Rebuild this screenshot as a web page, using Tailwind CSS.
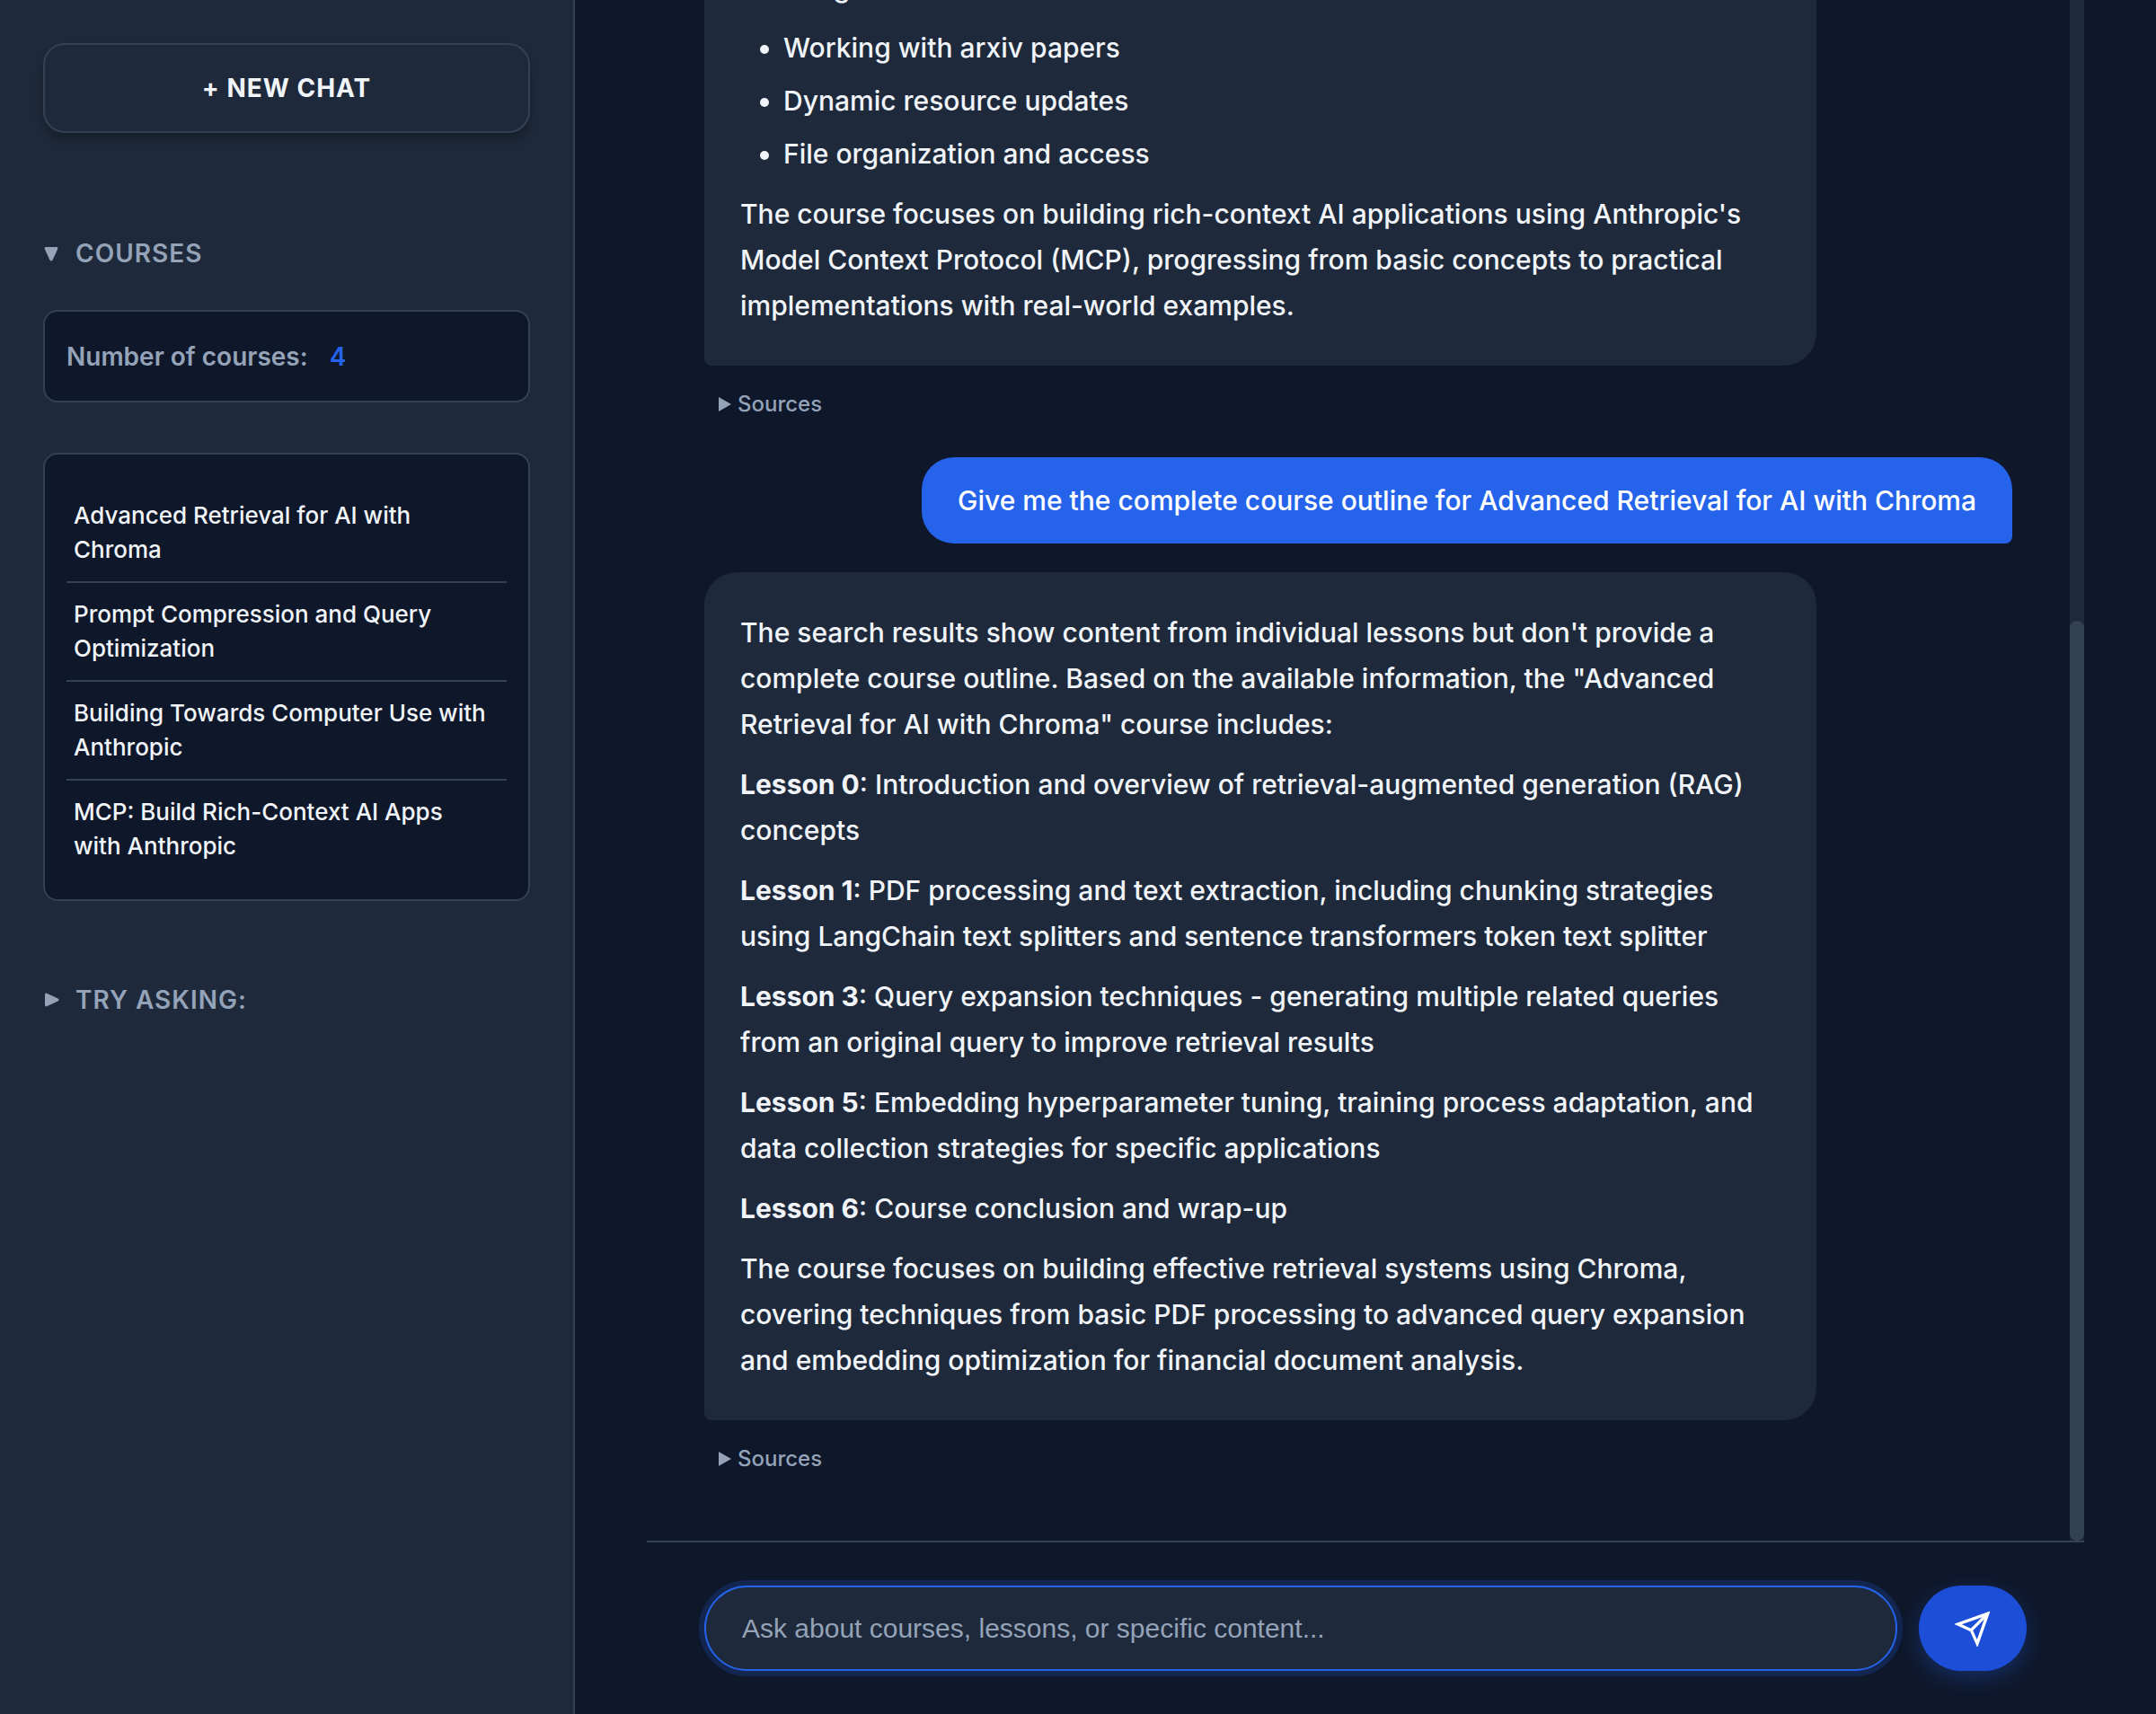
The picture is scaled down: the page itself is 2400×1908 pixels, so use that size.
<!DOCTYPE html>
<html lang="en">
<head>
<meta charset="utf-8">
<meta name="viewport" content="width=device-width, initial-scale=1">
<title>Course Materials Assistant</title>
<script src="https://cdn.jsdelivr.net/npm/@tailwindcss/browser@4"></script>
</head>
<body class="flex h-screen overflow-hidden bg-[#0f172a] font-['Inter',sans-serif] text-[#f1f5f9]">

  <aside class="flex w-[640px] shrink-0 flex-col border-r-2 border-[#334155] bg-[#1e293b] px-12 pt-12">
    <button type="button" class="h-[100px] w-full rounded-3xl border-2 border-[#334155] text-[28px] font-bold tracking-[1px] shadow-[0_8px_12px_-2px_rgba(0,0,0,0.3)]">+ NEW CHAT</button>

    <details open class="mt-28">
      <summary class="flex h-11 cursor-pointer list-none items-center text-[28px] leading-[44px] font-semibold tracking-[1px] text-[#94a3b8]">
        <svg class="mr-4 size-5" viewBox="0 0 20 20" fill="currentColor" aria-hidden="true"><path d="M3 3h12q2 0 1.300 2l-5.500 12q-1.800 3-3.600 0L1.700 5Q1 3 3 3z"/></svg>
        COURSES
      </summary>
      <div class="mt-[41px] flex h-[103px] items-center rounded-2xl border-2 border-[#334155] bg-[#0f172a] px-6 text-[28px] font-semibold">
        <span class="text-[#94a3b8]">Number of courses:</span>
        <span class="ml-6 text-[#2563eb]">4</span>
      </div>
      <ul class="mt-14 divide-y-2 divide-[#334155] rounded-2xl border-2 border-[#334155] bg-[#0f172a] px-6 pt-[33px] pb-6 text-[26px] leading-[38px] font-medium">
        <li class="px-2 py-4">Advanced Retrieval for AI with Chroma</li>
        <li class="px-2 py-4">Prompt Compression and Query Optimization</li>
        <li class="px-2 py-4">Building Towards Computer Use with Anthropic</li>
        <li class="px-2 py-4">MCP: Build Rich-Context AI Apps <br>with Anthropic</li>
      </ul>
    </details>

    <details class="mt-[88px]">
      <summary class="flex h-11 cursor-pointer list-none items-center text-[28px] leading-[44px] font-semibold tracking-[1px] text-[#94a3b8]">
        <svg class="mr-4 size-5" viewBox="0 0 20 20" fill="currentColor" aria-hidden="true"><path d="M2 4.500q0-2.500 2-1.800l12 5.500q3 1.800 0 3.600L4 17.300q-2 .7-2-1.800z"/></svg>
        TRY ASKING:
      </summary>
    </details>
  </aside>

  <main class="flex min-w-0 flex-1 flex-col px-20">
    <div class="flex min-h-0 flex-1">
      <section class="flex min-w-0 flex-1 flex-col justify-end overflow-hidden px-16 text-[30px] leading-[51px] font-medium" aria-label="Conversation">

        <article class="flex w-[85%] shrink-0 flex-col gap-4 rounded-[36px] rounded-bl-lg bg-[#1e293b] px-10 pt-[42px] pb-[41px]">
          <p>Creating</p>
          <ul class="flex list-disc flex-col gap-2 pl-12">
            <li>Working with arxiv papers</li>
            <li>Dynamic resource updates</li>
            <li>File organization and access</li>
          </ul>
          <p>The course focuses on building rich-context AI applications using Anthropic's Model Context Protocol (MCP), progressing from basic concepts to practical implementations with real-world examples.</p>
        </article>
        <details class="mt-[22px] mb-[38px] px-4">
          <summary class="flex h-[42px] cursor-pointer list-none items-center text-[24px] leading-[42px] font-medium text-[#94a3b8]">
            <svg class="mr-[7px] h-4 w-3.5" viewBox="0 0 14 16" fill="currentColor" aria-hidden="true"><path d="M0 0l14 8-14 8z"/></svg>
            Sources
          </summary>
        </details>

        <article class="max-w-[85%] shrink-0 self-end rounded-[36px] rounded-br-lg bg-[#2563eb] px-10 py-6 leading-[48px] text-white">Give me the complete course outline for Advanced Retrieval for AI with Chroma</article>

        <article class="mt-8 flex w-[85%] shrink-0 flex-col gap-4 rounded-[36px] rounded-bl-lg bg-[#1e293b] px-10 pt-[42px] pb-[41px]">
          <p>The search results show content from individual lessons but don't provide a complete course outline. Based on the available information, the "Advanced Retrieval for AI with Chroma" course includes:</p>
          <p><strong class="font-bold">Lesson 0</strong>: Introduction and overview of retrieval-augmented generation (RAG) concepts</p>
          <p><strong class="font-bold">Lesson 1</strong>: PDF processing and text extraction, including chunking strategies using LangChain text splitters and sentence transformers token text splitter</p>
          <p><strong class="font-bold">Lesson 3</strong>: Query expansion techniques - generating multiple related queries <br>from an original query to improve retrieval results</p>
          <p><strong class="font-bold">Lesson 5</strong>: Embedding hyperparameter tuning, training process adaptation, and data collection strategies for specific applications</p>
          <p><strong class="font-bold">Lesson 6</strong>: Course conclusion and wrap-up</p>
          <p>The course focuses on building effective retrieval systems using Chroma, covering techniques from basic PDF processing to advanced query expansion and embedding optimization for financial document analysis.</p>
        </article>
        <details class="mt-[22px] mb-[70px] px-4">
          <summary class="flex h-[42px] cursor-pointer list-none items-center text-[24px] leading-[42px] font-medium text-[#94a3b8]">
            <svg class="mr-[7px] h-4 w-3.5" viewBox="0 0 14 16" fill="currentColor" aria-hidden="true"><path d="M0 0l14 8-14 8z"/></svg>
            Sources
          </summary>
        </details>
      </section>

      <div class="flex w-4 shrink-0 flex-col justify-end bg-[#1e293b]" aria-hidden="true">
        <div class="rounded-full bg-[#334155]" style="height:59.7%"></div>
      </div>
    </div>

    <form class="flex gap-6 border-t-2 border-[#334155] px-16 py-12">
      <input type="text" aria-label="Ask a question" placeholder="Ask about courses, lessons, or specific content..." class="h-[95px] min-w-0 flex-1 rounded-full border-2 border-[#2563eb] bg-[#1e293b] px-10 font-['Liberation_Sans',sans-serif] text-[30px] outline-none placeholder:text-[#94a3b8] shadow-[0_0_0_6px_rgba(37,99,235,0.2)]">
      <button type="submit" aria-label="Send" class="flex h-[95px] w-[120px] shrink-0 items-center justify-center rounded-full bg-[#1d4ed8] text-white shadow-[0_8px_24px_rgba(37,99,235,0.3)]">
        <svg class="size-10" viewBox="0 0 24 24" fill="none" stroke="currentColor" stroke-width="2" aria-hidden="true"><path d="M22 2L11 13"/><path d="M22 2l-7 20-4-9-9-4 20-7z"/></svg>
      </button>
    </form>
  </main>
</body>
</html>
